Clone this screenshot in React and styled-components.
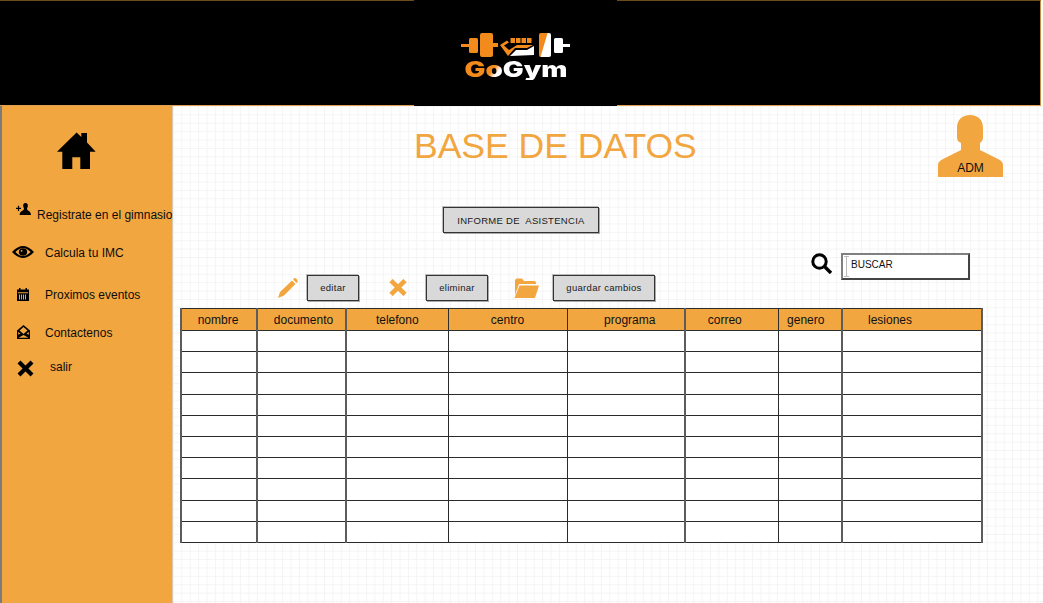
import React from 'react';
import styled, { createGlobalStyle } from 'styled-components';

const ORANGE = '#f2a640';

const GlobalStyle = createGlobalStyle`
  html, body {
    margin: 0;
    padding: 0;
    height: 100%;
    overflow: hidden;
    background: #fff;
    font-family: "Liberation Sans", Arial, sans-serif;
  }
`;

const Page = styled.div`
  width: 1043px;
  height: 603px;
  display: flex;
  flex-direction: column;
  overflow: hidden;
`;

const Header = styled.header`
  box-sizing: border-box;
  width: 1041px;
  height: 106px;
  flex: none;
  background: #000;
  border-top: 1px solid #6d4c1c;
  border-bottom: 1px solid #e0a050;
  border-right: 1px solid #c98f3f;
  display: flex;
`;

const LogoBox = styled.div`
  width: 203px;
  margin: -1px 0 -1px 414px;
  background: #000;
  display: flex;
  flex-direction: column;
  align-items: center;
  padding-top: 33px;
  box-sizing: border-box;
  filter: blur(0.6px);
`;

const LogoText = styled.span`
  font-family: Inter, "DejaVu Sans", sans-serif;
  font-weight: 900;
  font-size: 21px;
  line-height: 20px;
  margin-top: 3px;
  transform: scaleX(1.32);
  background: linear-gradient(120deg, #f28a1c 0 30%, #fff 36%);
  -webkit-background-clip: text;
  background-clip: text;
  color: transparent;
`;

const Body = styled.div`
  flex: 1;
  display: flex;
  min-height: 0;
`;

const Sidebar = styled.aside`
  box-sizing: border-box;
  width: 173px;
  flex: none;
  background: ${ORANGE};
  border-left: 2px solid #7b7b7b;
  border-right: 1px solid #d8c8b0;
  padding-top: 26px;
  font-size: 12px;
  color: #0c0c0c;
`;

const HomeLink = styled.div`
  margin-left: 55px;
  height: 37px;
`;

const NavRow = styled.div`
  display: flex;
  align-items: center;
  height: 20px;
  margin-top: ${(p) => p.$gap}px;
  white-space: nowrap;
`;

const NavIcon = styled.svg`
  flex: none;
  margin-left: ${(p) => p.$left}px;
  margin-right: ${(p) => p.$right}px;
  margin-bottom: ${(p) => p.$lift || 0}px;
`;

const Main = styled.main`
  flex: 1;
  min-width: 0;
  padding-left: 7px;
  background-color: #fff;
  background-image:
    linear-gradient(#f4f4f4 1px, transparent 1px),
    linear-gradient(90deg, #f4f4f4 1px, transparent 1px);
  background-size: 8.4px 8.4px;
`;

const TopRow = styled.div`
  display: flex;
  align-items: flex-start;
  height: 92px;
  padding: 9px 40px 0 234px;
`;

const Title = styled.h1`
  margin: 9px 0 0;
  font-size: 35.5px;
  line-height: 44px;
  font-weight: 400;
  color: ${ORANGE};
  white-space: nowrap;
`;

const Avatar = styled.div`
  position: relative;
  margin-left: auto;
  width: 65px;
  height: 62px;
`;

const AvatarLabel = styled.span`
  position: absolute;
  left: 0;
  right: 0;
  bottom: 2px;
  text-align: center;
  font-size: 12px;
  line-height: 14px;
  color: #111;
`;

const GreyButton = styled.button`
  box-sizing: border-box;
  height: ${(p) => p.$h}px;
  width: ${(p) => p.$w}px;
  margin: 0;
  padding: 0;
  flex: none;
  background: #d9d9d9;
  border: 1px solid #333;
  box-shadow: 1px 1px 0 #aaa, -1px -1px 0 #bbb;
  font-family: "Liberation Sans", Arial, sans-serif;
  font-size: 9.5px;
  letter-spacing: 0.3px;
  white-space: pre;
  color: #1a1a1a;
`;

const ReportRow = styled.div`
  padding-left: 263px;
  height: 46px;
`;

const ToolRow = styled.div`
  display: flex;
  align-items: flex-start;
  height: 55px;
`;

const Actions = styled.div`
  display: flex;
  align-items: center;
  margin: 21px 0 0 98px;
  height: 27px;
`;

const ActionIcon = styled.svg`
  flex: none;
  margin-left: ${(p) => p.$left}px;
  margin-right: ${(p) => p.$right}px;
`;

const SearchBox = styled.div`
  display: flex;
  align-items: flex-start;
  margin-left: auto;
  margin-right: 73px;
`;

const SearchIcon = styled.svg`
  flex: none;
  margin-right: 8px;
`;

const SearchField = styled.div`
  box-sizing: border-box;
  width: 129px;
  height: 27px;
  background: #fff;
  border: 2px solid #444;
  border-top-color: #808080;
  border-left-color: #808080;
  display: flex;
  align-items: flex-start;
  padding: 1px 0 0 3px;
  font-size: 10px;
  line-height: 18px;
  color: #111;
`;

const Caret = styled.span`
  position: relative;
  width: 1px;
  height: 21px;
  background: #bbb;
  margin-right: 4px;

  &::before,
  &::after {
    content: '';
    position: absolute;
    left: -2px;
    width: 5px;
    height: 1px;
    background: #bbb;
  }
  &::before {
    top: 0;
  }
  &::after {
    bottom: 0;
  }
`;

const Grid = styled.table`
  border-collapse: collapse;
  table-layout: fixed;
  width: 801px;
  font-size: 12px;
`;

const HeadCell = styled.th`
  height: 21px;
  padding: 0 ${(p) => p.$pr || 0}px 0 ${(p) => p.$pl || 0}px;
  background: ${ORANGE};
  border: 1px solid #2e2e2e;
  ${(p) => p.$soft && 'border-left: 2px solid #5c5c5c;'}
  ${(p) => p.$end && 'border-right: 2px solid #5c5c5c;'}
  font-weight: 400;
  color: #111;
  text-align: ${(p) => p.$align || 'center'};
`;

const Cell = styled.td`
  height: 20.2px;
  padding: 0;
  background: #fff;
  border: 1px solid #2a2a2a;
  ${(p) => p.$soft && 'border-left: 2px solid #5c5c5c;'}
  ${(p) => p.$end && 'border-right: 2px solid #5c5c5c;'}
`;

const columns = [
  { label: 'nombre', width: 76, pr: 2, soft: true },
  { label: 'documento', width: 89, pl: 4, soft: true },
  { label: 'telefono', width: 102, soft: true },
  { label: 'centro', width: 119 },
  { label: 'programa', width: 118, pl: 8 },
  { label: 'correo', width: 93, pr: 14, soft: true },
  { label: 'genero', width: 64, pr: 8 },
  { label: 'lesiones', width: 140, pl: 25, align: 'left', soft: true, end: true },
];

const rows = Array.from({ length: 10 }, (_, i) => i);

function HomeIcon() {
  return (
    <svg width="39" height="37" viewBox="0 0 39 37">
      <path
        fill="#000"
        d="M19.6 0.5 L24.3 5 V1 H30 V10.5 L38.7 19.7 H33 V37 H23.3 V25.3 H15.3 V37 H5.3 V19.7 H0 Z"
      />
    </svg>
  );
}

function Logo() {
  return (
    <svg width="110" height="24" viewBox="0 0 110 24">
      <defs>
        <linearGradient id="plateFill" x1="0" y1="0" x2="1" y2="0.6">
          <stop offset="0.5" stopColor="#f28a1c" />
          <stop offset="0.56" stopColor="#fff" />
        </linearGradient>
      </defs>
      <g fill="#f28a1c">
        <rect x="0" y="11" width="8" height="3" />
        <rect x="8" y="5" width="9" height="15" rx="1.5" />
        <rect x="19" y="0" width="13" height="24" rx="2" />
        <rect x="32" y="10" width="5" height="4" />
        <rect x="49.5" y="5" width="4.5" height="5" />
        <rect x="55" y="5" width="4.5" height="5" />
        <rect x="60.5" y="5" width="4.5" height="5" />
        <rect x="66" y="5" width="4.5" height="5" />
        <path d="M39 12 L46 7.5 L48 9.5 L43 12.5 L48 17 L56 12 L72 12 L66 15 L54 15 L47 23 Z" />
      </g>
      <path fill="#fff" d="M55 17 L66 17 L73 13 L73 22 L49 23 Z" />
      <rect x="78" y="0" width="12" height="24" rx="2" fill="url(#plateFill)" />
      <rect x="93" y="5" width="9" height="15" rx="1.5" fill="#fff" />
      <rect x="102" y="11" width="7" height="3" fill="#fff" />
    </svg>
  );
}

function App() {
  return (
    <Page>
      <GlobalStyle />
      <Header>
        <LogoBox>
          <Logo />
          <LogoText>GoGym</LogoText>
        </LogoBox>
      </Header>
      <Body>
        <Sidebar>
          <HomeLink>
            <HomeIcon />
          </HomeLink>
          <NavRow $gap={36}>
            <NavIcon $left={14} $right={6} $lift={12} width="15" height="12" viewBox="0 0 15 12">
              <path d="M0 4.8 H5 V6 H0 Z M1.9 2.8 H3.1 V8 H1.9 Z" />
              <path d="M9.5 0 C11.4 0 12 1.4 11.8 3 C11.7 4.2 11.2 5 10.9 6 C11.5 7.8 15 8 15 12 H3.6 C3.6 8 7.5 7.8 8.1 6 C7.8 5 7.3 4.2 7.2 3 C7 1.4 7.6 0 9.5 0 Z" />
            </NavIcon>
            Registrate en el gimnasio
          </NavRow>
          <NavRow $gap={18}>
            <NavIcon $left={10} $right={11} $lift={2} width="22" height="12" viewBox="0 0 23 14" preserveAspectRatio="none">
              <path
                fillRule="evenodd"
                d="M0 7 C4 2 8 0 11.5 0 C15 0 19 2 23 7 C19 12 15 14 11.5 14 C8 14 4 12 0 7 Z M3.5 7 C6.5 10.5 9 11.8 11.5 11.8 C14 11.8 16.5 10.5 19.5 7 C16.5 3.5 14 2.2 11.5 2.2 C9 2.2 6.5 3.5 3.5 7 Z"
              />
              <circle cx="11.5" cy="7" r="4.3" />
              <circle cx="10" cy="5.6" r="1" fill={ORANGE} />
            </NavIcon>
            Calcula tu IMC
          </NavRow>
          <NavRow $gap={22}>
            <NavIcon $left={15} $right={16} $lift={1} width="12" height="13" viewBox="0 0 12 13">
              <path
                fillRule="evenodd"
                d="M0 1.5 H2 V0 H3.5 V1.5 H8.5 V0 H10 V1.5 H12 V13 H0 Z M1 4.2 V5.2 H11 V4.2 Z M2 6.5 V11.5 H3 V6.5 Z M4 6.5 V11.5 H5 V6.5 Z M6 6.5 V11.5 H7 V6.5 Z M8 6.5 V11.5 H9 V6.5 Z"
              />
            </NavIcon>
            Proximos eventos
          </NavRow>
          <NavRow $gap={18}>
            <NavIcon $left={15} $right={15} $lift={3} width="13" height="14" viewBox="0 0 13 14">
              <path
                fillRule="evenodd"
                d="M6.5 0 L13 5.5 V14 H0 V5.5 Z M6.5 2 L2.5 5.5 L6.5 9 L10.5 5.5 Z M1.2 7 V9.8 L3.5 8.4 Z M11.8 7 L9.5 8.4 L11.8 9.8 Z M1.5 12.8 H11.5 L6.5 9.9 Z"
              />
            </NavIcon>
            Contactenos
          </NavRow>
          <NavRow $gap={14}>
            <NavIcon $left={15} $right={16} $lift={-3} width="17" height="17" viewBox="0 0 17 17">
              <path d="M2 2 L15 15 M15 2 L2 15" stroke="#000" strokeWidth="4.2" fill="none" />
            </NavIcon>
            salir
          </NavRow>
        </Sidebar>
        <Main>
          <TopRow>
            <Title>BASE DE DATOS</Title>
            <Avatar>
              <svg width="65" height="62" viewBox="0 0 65 62">
                <path
                  fill={ORANGE}
                  d="M32 0 C40 0 45 5 45 13 V22 C45 26 43 27 42 28 V35 L60 44 C63 45.5 65 47 65 50 V62 H0 V50 C0 47 2 45.5 5 44 L23 35 V28 C21 27 19 26 19 22 V13 C19 5 24 0 32 0 Z"
                />
              </svg>
              <AvatarLabel>ADM</AvatarLabel>
            </Avatar>
          </TopRow>
          <ReportRow>
            <GreyButton $w={156} $h={26}>{'INFORME DE  ASISTENCIA'}</GreyButton>
          </ReportRow>
          <ToolRow>
            <Actions>
              <ActionIcon $left={0} $right={8} width="21" height="21" viewBox="0 0 21 21">
                <path fill={ORANGE} d="M0 21 L2 15 L14 3.5 L17.5 7 L6 18.5 Z M15 2.5 L16.5 1 C17.5 0.5 20 3 19.8 4 L18.5 6 Z" />
              </ActionIcon>
              <GreyButton $w={52} $h={26}>editar</GreyButton>
              <ActionIcon $left={30} $right={19} width="18" height="17" viewBox="0 0 18 17">
                <path d="M2 1.5 L16 15.5 M16 1.5 L2 15.5" stroke={ORANGE} strokeWidth="4.6" fill="none" />
              </ActionIcon>
              <GreyButton $w={62} $h={26}>eliminar</GreyButton>
              <ActionIcon $left={26} $right={14} width="25" height="20" viewBox="0 0 25 20">
                <path fill={ORANGE} d="M1 18 V2 L2.5 0.5 H8 L10 3 H21 L22 4.5 V6 H5 L2 14 Z" />
                <path fill={ORANGE} d="M0.5 20 L5.5 7.5 H25 L21 20 Z" />
              </ActionIcon>
              <GreyButton $w={102} $h={26}>guardar cambios</GreyButton>
            </Actions>
            <SearchBox>
              <SearchIcon width="22" height="21" viewBox="0 0 22 21">
                <circle cx="8.5" cy="8.5" r="6.7" fill="none" stroke="#000" strokeWidth="3" />
                <path d="M13.5 13.5 L20 20" stroke="#000" strokeWidth="3.4" />
              </SearchIcon>
              <SearchField>
                <Caret />
                BUSCAR
              </SearchField>
            </SearchBox>
          </ToolRow>
          <Grid>
            <colgroup>
              {columns.map((c) => (
                <col key={c.label} width={c.width} />
              ))}
            </colgroup>
            <thead>
              <tr>
                {columns.map((c) => (
                  <HeadCell key={c.label} $pl={c.pl} $pr={c.pr} $align={c.align} $soft={c.soft} $end={c.end}>
                    {c.label}
                  </HeadCell>
                ))}
              </tr>
            </thead>
            <tbody>
              {rows.map((r) => (
                <tr key={r}>
                  {columns.map((c) => (
                    <Cell key={c.label} $soft={c.soft} $end={c.end} />
                  ))}
                </tr>
              ))}
            </tbody>
          </Grid>
        </Main>
      </Body>
    </Page>
  );
}

export default App;
